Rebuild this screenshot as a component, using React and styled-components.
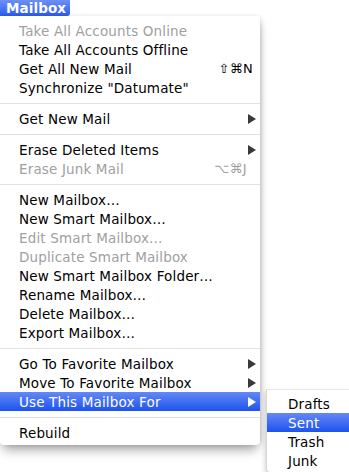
import React from 'react';
import styled, { createGlobalStyle } from 'styled-components';

const GlobalStyle = createGlobalStyle`
	html, body {
		margin: 0;
		padding: 0;
		background: #fff;
	}
	body {
		font-family: "DejaVu Sans", "Liberation Sans", sans-serif;
		-webkit-font-smoothing: antialiased;
	}
`

const Screen = styled.div`
	width: 349px;
	height: 472px;
	overflow: hidden;
	background: #fff;
	position: relative;
`

const TitleTab = styled.div`
	width: 70px;
	height: 16px;
	box-sizing: border-box;
	padding-left: 6px;
	display: flex;
	align-items: center;
	color: #fff;
	font-weight: bold;
	font-size: 13.5px;
	letter-spacing: 0.1px;
	background: linear-gradient(#6d8ff6, #2c5cf0);
	border-bottom-right-radius: 3px;
`

const Menu = styled.div`
	width: 260px;
	box-sizing: border-box;
	padding: 5px 0 3px;
	background: #fff;
	box-shadow: 0 7px 12px -3px rgba(0, 0, 0, 0.4), 2px 0 6px -3px rgba(0, 0, 0, 0.3);
	border-bottom-right-radius: 4px;
	border-bottom-left-radius: 4px;
`

const Row = styled.div`
	position: relative;
	height: 19px;
	display: flex;
	align-items: center;
	padding: 0 4px 0 ${({ $left }) => $left || 19}px;
	font-size: 13.5px;
	letter-spacing: 0.15px;
	white-space: nowrap;
	color: ${({ $disabled, $active }) => $active ? '#fff' : $disabled ? '#a0a0a0' : '#000'};
	background: ${({ $active }) => $active ? 'linear-gradient(#6489f5, #1d52ee)' : 'transparent'};
`

const Label = styled.span`
	flex: 1;
`

const Shortcut = styled.span`
	margin-right: ${({ $gap }) => $gap || 3}px;
	font-size: 13px;
	letter-spacing: 0.3px;
`

const Separator = styled.div`
	height: 12px;
	display: flex;
	align-items: center;

	&::after {
		content: '';
		flex: 1;
		height: 1px;
		background: #e2e2e2;
	}
`

const Submenu = styled.div`
	position: absolute;
	top: -3px;
	left: 266px;
	width: 83px;
	box-sizing: border-box;
	padding: 4px 0 2px;
	background: #fff;
	border-left: 1px solid #d6d6d6;
	border-top: 1px solid #e8e8e8;
	box-shadow: -1px 3px 5px rgba(0, 0, 0, 0.18);
	border-bottom-left-radius: 4px;
`

const Arrow = ({ color }) => (
	<svg width="8" height="10" viewBox="0 0 8 10">
		<polygon points="0,0 8,5 0,10" fill={color} />
	</svg>
)

const items = [
	{ label: 'Take All Accounts Online', disabled: true },
	{ label: 'Take All Accounts Offline' },
	{ label: 'Get All New Mail', shortcut: '⇧⌘N' },
	{ label: 'Synchronize "Datumate"' },
	'-',
	{ label: 'Get New Mail', sub: true },
	'-',
	{ label: 'Erase Deleted Items', sub: true },
	{ label: 'Erase Junk Mail', disabled: true, shortcut: '⌥⌘J', gap: 9 },
	'-',
	{ label: 'New Mailbox…' },
	{ label: 'New Smart Mailbox…' },
	{ label: 'Edit Smart Mailbox…', disabled: true },
	{ label: 'Duplicate Smart Mailbox', disabled: true },
	{ label: 'New Smart Mailbox Folder…' },
	{ label: 'Rename Mailbox…' },
	{ label: 'Delete Mailbox…' },
	{ label: 'Export Mailbox…' },
	'-',
	{ label: 'Go To Favorite Mailbox', sub: true },
	{ label: 'Move To Favorite Mailbox', sub: true },
	{ label: 'Use This Mailbox For', sub: true, active: true, open: true },
	'-',
	{ label: 'Rebuild' },
];

const subItems = ['Drafts', 'Sent', 'Trash', 'Junk'];

export default function App() {
	return (
		<Screen>
			<GlobalStyle />
			<TitleTab>Mailbox</TitleTab>
			<Menu>
				{items.map((item, i) => item === '-' ? (
					<Separator key={i} />
				) : (
					<Row key={i} $disabled={item.disabled} $active={item.active}>
						<Label>{item.label}</Label>
						{item.shortcut && <Shortcut $gap={item.gap}>{item.shortcut}</Shortcut>}
						{item.sub && <Arrow color={item.active ? '#fff' : '#3a3a3a'} />}
						{item.open && (
							<Submenu>
								{subItems.map(s => (
									<Row key={s} $left={21} $active={s === 'Sent'}>
										<Label>{s}</Label>
									</Row>
								))}
							</Submenu>
						)}
					</Row>
				))}
			</Menu>
		</Screen>
	);
}
